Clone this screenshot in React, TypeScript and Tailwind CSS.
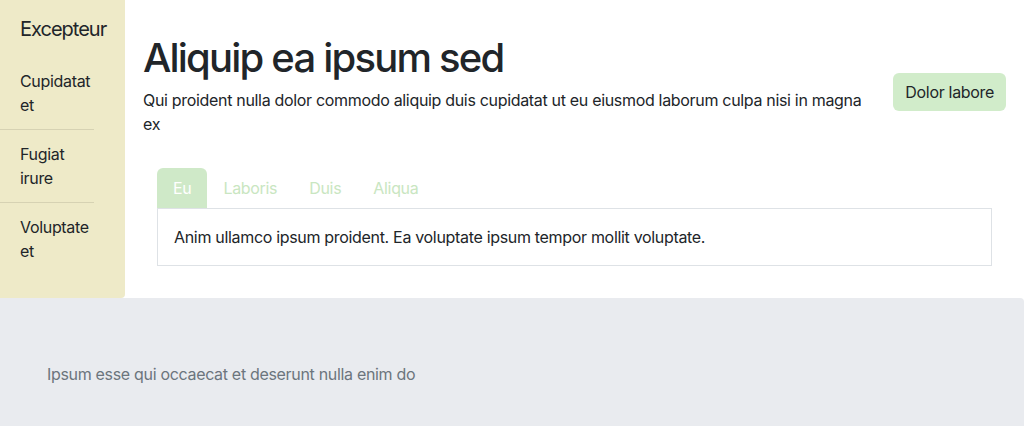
import React from 'react';

const App = () => {
  const navItems = ['Cupidatat et', 'Fugiat irure', 'Voluptate et'];
  const tabs = ['Eu', 'Laboris', 'Duis', 'Aliqua'];

  return (
    <div
      className="min-h-screen bg-white text-[#212529] tracking-[-0.02em]"
      style={{ fontFamily: 'Inter, "Noto Sans", sans-serif' }}
    >
      <div className="flex">
        {/* Sidebar */}
        <aside className="w-[125px] shrink-0 bg-[#eeeac8] rounded-br pt-4">
          <div className="pl-5 text-xl leading-6 mb-4 tracking-[-0.05em] pt-px">Excepteur</div>
          <ul className="w-[94px]">
            {navItems.map((item, i) => (
              <li
                key={i}
                className={`pl-5 py-3 text-base leading-6 ${i < navItems.length - 1 ? 'border-b border-[#d6d2b3]' : ''}`}
              >
                {item}
              </li>
            ))}
          </ul>
        </aside>

        {/* Main */}
        <main className="flex-1 px-[18px] pt-8 pb-8">
          <div className="flex items-start">
            <div className="flex-1 pr-[28px]">
              <h1 className="text-[40px] leading-[48px] font-medium tracking-[-0.045em] pt-0.5">
                Aliquip ea ipsum sed
              </h1>
              <p className="text-base leading-6 mt-1.5">
                Qui proident nulla dolor commodo aliquip duis cupidatat ut eu eiusmod laborum culpa nisi in magna ex
              </p>
            </div>
            <button className="mt-[41px] h-[38px] px-3 rounded-md bg-[#d1ecca] text-base">
              Dolor labore
            </button>
          </div>

          <div className="mx-[14px] mt-8">
            <div className="flex">
              {tabs.map((tab, i) => (
                <div
                  key={i}
                  className={`h-10 px-4 flex items-center text-base rounded-t-md ${
                    i === 0 ? 'bg-[#cfe9c8] text-white' : 'text-[#c9e6c1]'
                  }`}
                >
                  {tab}
                </div>
              ))}
            </div>
            <div className="border border-[#dee2e6] p-4 text-base leading-6">
              Anim ullamco ipsum proident. Ea voluptate ipsum tempor mollit voluptate.
            </div>
          </div>
        </main>
      </div>

      {/* Footer */}
      <footer className="bg-[#e9ebef] rounded-tr pt-16 pb-10 px-[47px] text-base leading-6 text-[#6c757d]">
        Ipsum esse qui occaecat et deserunt nulla enim do
      </footer>
    </div>
  );
};

export default App;
